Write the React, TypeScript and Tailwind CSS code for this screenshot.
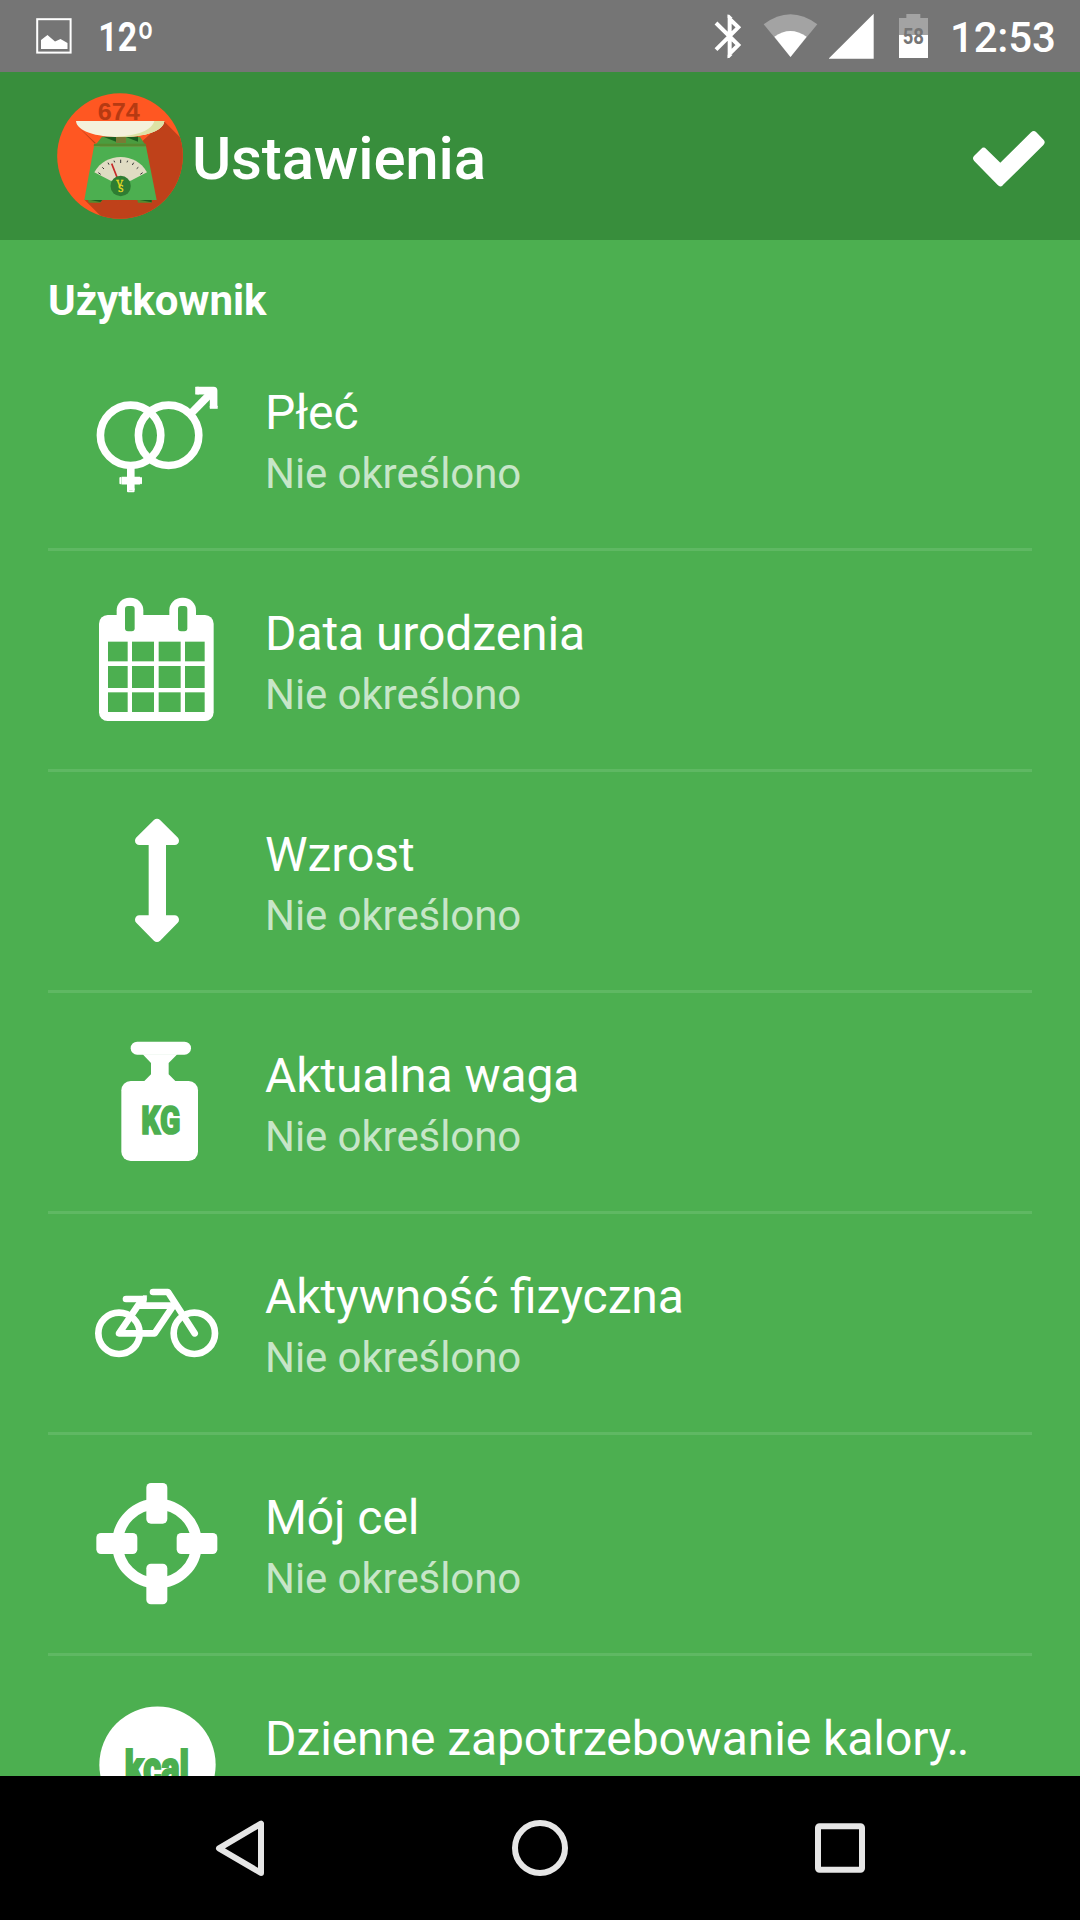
import type { ReactNode } from 'react';

const GenderIcon = () => (
  <svg className="w-40 h-[218px]" viewBox="0 0 160 218" fill="none" stroke="white" strokeWidth="7.6">
    <circle cx="50.6" cy="105.3" r="30.2" />
    <circle cx="88.6" cy="105.3" r="30.2" />
    <path d="M110 84.5 L132 62" />
    <path d="M117.5 60.6 H133.6 V76.8" strokeLinejoin="round" />
    <path d="M115.5 57 h3 v7.2 h-3z M130 76 h7.4 v2.5 h-7.4z" fill="white" stroke="white" strokeWidth="0.6" strokeLinejoin="round" />
    <path d="M123 59 h13 v14z" fill="white" stroke="none" />
    <path d="M50.8 138 V160 M41.5 150.6 H60" />
    <path d="M48 159 h5.6 v2.2 h-5.6z M40.4 148 v5.2 M61 148 v5.2" strokeWidth="2" strokeLinejoin="round" strokeLinecap="round" />
  </svg>
);

const CalendarIcon = () => (
  <svg className="w-40 h-[218px]" viewBox="0 -87 480 654">
    <rect x="57" y="105" width="344" height="318" rx="26" fill="white" />
    <rect x="110" y="53" width="80" height="130" rx="38" fill="white" />
    <rect x="268" y="53" width="80" height="130" rx="38" fill="white" />
    <g fill="#4caf50">
      <rect x="135" y="78" width="29" height="76" rx="9" />
      <rect x="294" y="78" width="28" height="76" rx="9" />
      {[185, 258, 337].map((y, i) => (
        <g key={y}>
          <rect x="84" y={y} width="59" height={i === 1 ? 66 : 59} />
          <rect x="156" y={y} width="66" height={i === 1 ? 66 : 59} />
          <rect x="236" y={y} width="66" height={i === 1 ? 66 : 59} />
          <rect x="315" y={y} width="59" height={i === 1 ? 66 : 59} />
        </g>
      ))}
    </g>
  </svg>
);

const HeightIcon = () => (
  <svg className="w-40 h-[218px]" viewBox="0 -84 480 654" fill="white" stroke="white" strokeWidth="26" strokeLinejoin="round">
    <path d="M231 69 L284 122 H178 Z" />
    <path d="M231 413 L284 359 H178 Z" />
    <rect x="206" y="120" width="52" height="240" stroke="none" />
  </svg>
);

const WeightIcon = () => (
  <svg className="w-40 h-[218px]" viewBox="0 -81 480 654" fill="white">
    <rect x="152" y="65" width="181" height="39" rx="19.5" />
    <path d="M188 103 L213 129 V163 L190 186 H289 L266 163 V129 L292 103 Z" />
    <rect x="124" y="183" width="230" height="240" rx="28" />
    <text x="184" y="343" textLength="117" lengthAdjust="spacingAndGlyphs" fill="#4caf50" stroke="#4caf50" strokeWidth="5" className="font-['Roboto',sans-serif] font-black text-[117px]">
      KG
    </text>
  </svg>
);

const BikeIcon = () => (
  <svg className="w-40 h-[218px]" viewBox="0 -138 480 654" fill="none" stroke="white" strokeWidth="20" strokeLinecap="round" strokeLinejoin="round">
    <circle cx="117" cy="220" r="62" />
    <circle cx="343" cy="220" r="62" />
    <path d="M219 96 H264 L344 220" />
    <path d="M138 117 H190" />
    <path d="M190 107 L200 107 L198 130 L180 134" strokeWidth="2" fill="white" />
    <path d="M182 137 H280 L224 220 H117 L184 122" />
  </svg>
);

const TargetIcon = () => (
  <svg className="w-40 h-[218px]" viewBox="0 -75 480 654" fill="white">
    <circle cx="231" cy="251" r="118.5" fill="none" stroke="white" strokeWidth="32" />
    <rect x="199" y="69" width="63" height="122" rx="14" />
    <rect x="199" y="311" width="63" height="122" rx="14" />
    <rect x="49" y="219" width="123" height="63" rx="14" />
    <rect x="290" y="219" width="122" height="63" rx="14" />
  </svg>
);

const KcalIcon = () => (
  <svg className="w-40 h-[218px]" viewBox="0 -72 480 654" fill="white">
    <circle cx="232.5" cy="254" r="174.5" />
    <text x="134" y="313" textLength="193" lengthAdjust="spacingAndGlyphs" fill="#4caf50" stroke="#4caf50" strokeWidth="6" className="font-['Roboto',sans-serif] font-black text-[136px]">
      kcal
    </text>
  </svg>
);

const ScaleLogo = () => (
  <svg className="w-[148px] h-[168px]" viewBox="0 -24 444 504">
    <defs>
      <clipPath id="disc">
        <circle cx="240" cy="228" r="188.5" />
      </clipPath>
    </defs>
    <circle cx="240" cy="228" r="188.5" fill="#ff5722" />
    <g clipPath="url(#disc)">
      <path d="M112 138 L163 190 L300 190 L372 124 L440 192 V430 H204 L134 360 L180 200 Z" fill="#bf411a" />
    </g>
    <text x="173" y="121" textLength="126" lengthAdjust="spacingAndGlyphs" fill="#b63a12" className="font-['Liberation_Sans',sans-serif] font-bold text-[74px]">
      674
    </text>
    {/* neck and feet */}
    <path d="M186 170 H300 L318 198 H164 Z" fill="#4b9c3f" />
    <path d="M228 171 h30 v18 h-30z" fill="#7a7a35" />
    <path d="M190 170 L228 185 V170 Z M256 170 L294 185 V170 Z" fill="#1b5e20" />
    <path d="M162 191 H317 L319 199 H161 Z" fill="#558b2f" />
    <path d="M144 360 h43 l-6 8 h-35z M292 360 h43 v8 h-41z" fill="#558b2f" />
    <path d="M152 360 h35 l-6 6z M300 360 h35 v7z" fill="#1b5e20" />
    <path d="M162 199 H318 L350 360 H133 Z" fill="#4caf50" />
    {/* bowl */}
    <path d="M108 123 H373 C370 154 316 171 240 171 C166 171 111 154 108 123 Z" fill="#f4f1dc" />
    <path d="M343 123 H373 C370 154 316 171 240 171 L224 170 C294 168 335 150 343 123 Z" fill="#dde2a5" />
    {/* dial */}
    <path d="M163 277 C196 216 288 216 321 277 L272 302 H212 Z" fill="#e0dcc3" />
    <path d="M175 278 l7 5 M187 262 l5 5 M204 248 l3 6 M222 242 l2 5 M242 239 v10 M263 242 l-2 5 M281 248 l-4 7 M295 262 l-5 4 M308 278 l-7 5" stroke="#333" strokeWidth="3" />
    <path d="M215 251 L232 294" stroke="#c62828" strokeWidth="5" />
    <circle cx="242" cy="318" r="30.5" fill="#2e7d32" />
    <text x="228" y="320" fill="#e6dc22" stroke="#e6dc22" strokeWidth="1" className="font-['Liberation_Serif',serif] text-[30px]">
      V<tspan x="234" dy="15">S</tspan>
    </text>
  </svg>
);

const StatusBar = () => (
  <div className="w-full h-[72px] bg-[#757575] text-white flex items-center shrink-0">
    <svg className="w-9 h-9 ml-9" viewBox="0 0 36 36">
      <rect x="1.2" y="1.2" width="33.4" height="33.4" fill="none" stroke="white" strokeWidth="2" />
      <path d="M5 22 L11.5 17 L19 23.5 L24.5 21 L31.5 25 V31 H5 Z" fill="white" />
    </svg>
    <svg className="w-[60px] h-[72px] ml-6" viewBox="0 0 60 72" fill="white">
      <text x="2.3" y="50.5" textLength="55.500" lengthAdjust="spacingAndGlyphs" className="font-['Roboto',sans-serif] font-bold text-[40px]">
        12<tspan className="text-[43px]" dy="2.5">º</tspan>
      </text>
    </svg>

    {/* Bluetooth */}
    <svg className="w-7 h-[72px] ml-auto" viewBox="102 0 84 216" fill="none" stroke="white" strokeWidth="12">
      <path d="M108 69 L175 135 L149 161 V57 L175 82 L108 149" />
      <path d="M143 44 h5 l10 10 h-15z M143 174 h5 l10 -10 h-15z" fill="white" stroke="none" />
    </svg>
    {/* Wifi */}
    <svg className="w-[55px] h-[72px] ml-[21px]" viewBox="249 0 165 216">
      <path d="M251 73 Q331 13 412 73 L331.500 171 Z" fill="#a3a3a3" />
      <path d="M283 110 Q331 76 380 110 L331.500 171 Z" fill="white" />
    </svg>
    {/* Signal */}
    <svg className="w-[45px] h-[72px] ml-[11px]" viewBox="447 0 135 216">
      <path d="M581 41 V176 H446 Z" fill="white" />
    </svg>
    {/* Battery */}
    <svg className="w-[29px] h-[72px] ml-[25px]" viewBox="657 0 87 216">
      <path d="M679 42 H721 V54 H744 V105 H657 V54 H679 Z" fill="#a3a3a3" />
      <rect x="657" y="105" width="87" height="69" fill="white" />
      <text x="668" y="132" textLength="64" lengthAdjust="spacingAndGlyphs" fill="#757575" className="font-['Roboto',sans-serif] font-bold text-[64px]">
        58
      </text>
    </svg>
    <p className="ml-[22px] w-[130px] pt-1 text-[42px] leading-[50px] tracking-[-0.2px] font-medium">12:53</p>
  </div>
);

const Header = () => (
  <div className="w-full h-[168px] bg-[#388e3c] text-white flex items-center shrink-0 pl-10">
    <ScaleLogo />
    <h1 className="ml-1 pt-[5px] text-[60px] leading-[70px] tracking-[-0.15px] font-medium">Ustawienia</h1>
    <svg className="w-20 h-[168px] ml-auto mr-8" viewBox="864 216 240 504">
      <path d="M911 454.500 L890.500 475 L961 547.500 L1082.500 427 L1061 404.500 L961 503.500 Z" fill="white" stroke="white" strokeWidth="22" strokeLinejoin="round" />
    </svg>
  </div>
);

interface RowProps {
  icon: ReactNode;
  title: ReactNode;
  value: string;
}

const SettingRow = ({ icon, title, value }: RowProps) => (
  <div className="h-[221px] border-b-[3px] border-b-[#5fb863] flex gap-[25px] pl-8 shrink-0">
    {icon}
    <div className="pt-[55px] whitespace-nowrap">
      <p className="text-[48px] leading-[56px] tracking-[-0.08px] [font-feature-settings:'liga'] text-white">{title}</p>
      <p className="mt-2 text-[42px] leading-[49px] tracking-[-0.08px] text-white/70">{value}</p>
    </div>
  </div>
);

const rows: RowProps[] = [
  { icon: <GenderIcon />, title: 'Płeć', value: 'Nie określono' },
  { icon: <CalendarIcon />, title: 'Data urodzenia', value: 'Nie określono' },
  { icon: <HeightIcon />, title: 'Wzrost', value: 'Nie określono' },
  { icon: <WeightIcon />, title: 'Aktualna waga', value: 'Nie określono' },
  { icon: <BikeIcon />, title: 'Aktywność fizyczna', value: 'Nie określono' },
  { icon: <TargetIcon />, title: 'Mój cel', value: 'Nie określono' },
  {
    icon: <KcalIcon />,
    title: (
      <>
        Dzienne zapotrzebowanie kalor<span className="tracking-[-2.2px]">y..</span>
      </>
    ),
    value: '',
  },
];

const NavigationBar = () => (
  <div className="w-full h-36 bg-black px-[90px] grid grid-cols-3 place-items-center shrink-0">
    <svg className="w-15 h-15" viewBox="0 0 60 60" fill="none" stroke="#e6e6e6" strokeWidth="6" strokeLinejoin="round">
      <path d="M9 30.300 L51 5.600 V55 Z" />
    </svg>
    <svg className="w-15 h-15" viewBox="0 0 60 60" fill="none" stroke="#e6e6e6" strokeWidth="6">
      <circle cx="30" cy="30" r="25" />
    </svg>
    <svg className="w-15 h-15" viewBox="0 0 60 60" fill="none" stroke="#e6e6e6" strokeWidth="6">
      <rect x="8" y="8.300" width="44" height="43.400" rx="1.500" />
    </svg>
  </div>
);

const App = () => {
  return (
    <div className="w-[1080px] h-[1920px] bg-[#4caf50] flex flex-col overflow-hidden font-['Roboto',sans-serif]">
      <StatusBar />
      <Header />
      <div className="flex-1 min-h-0 overflow-hidden px-12">
        <h2 className="h-[90px] pt-9 text-[42px] leading-[50px] font-bold text-white">Użytkownik</h2>
        {rows.map((row, index) => (
          <SettingRow key={index} {...row} />
        ))}
      </div>
      <NavigationBar />
    </div>
  );
};

export default App;
